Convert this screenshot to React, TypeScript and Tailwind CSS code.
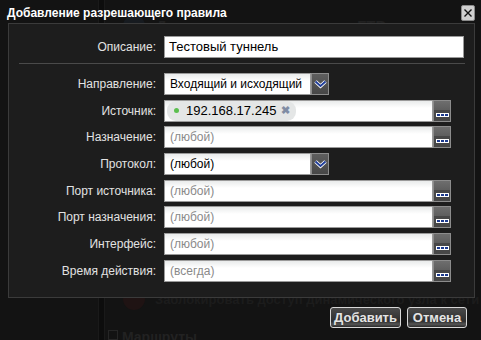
import React from 'react';

const FONT = "font-['Liberation_Sans',Arial,sans-serif]";

const EllipsisButton: React.FC = () => (
  <div className="w-[18px] h-full shrink-0 border border-[#8c8c8c] bg-[linear-gradient(#6e6e6e_0%,#5e5e5e_45%,#474747_45%,#474747_100%)] flex items-end justify-center pb-[4px]">
    <div className="flex gap-[1px] bg-white p-[1px]">
      <span className="w-[3px] h-[2px] bg-[#1d3b8f]" />
      <span className="w-[3px] h-[2px] bg-[#1d3b8f]" />
      <span className="w-[3px] h-[2px] bg-[#1d3b8f]" />
    </div>
  </div>
);

const ArrowButton: React.FC = () => (
  <div className="w-[18px] h-full shrink-0 border border-[#8c8c8c] bg-[linear-gradient(#5e5e5e,#474747)] flex items-center justify-center">
    <svg width="13" height="9" viewBox="0 0 13 9">
      <polyline points="1.5,1.5 6.5,6 11.5,1.5" fill="none" stroke="#ffffff" strokeWidth="3.6" />
      <polyline points="1.5,1.5 6.5,6 11.5,1.5" fill="none" stroke="#1f3d9a" strokeWidth="1.8" />
    </svg>
  </div>
);

const inputBox =
  'flex-1 h-full border border-[#9a9a9a] bg-[linear-gradient(#e9ebeb_0px,#ffffff_7px)] flex items-center px-[5px] text-[12px]';

type FieldProps = {
  label: string;
  value?: string;
  placeholder?: string;
  kind: 'lookup' | 'select';
  chip?: string;
};

const Row: React.FC<FieldProps> = ({ label, value, placeholder, kind, chip }) => {
  const width = kind === 'select' ? 'w-[165px]' : 'w-[287px]';
  return (
    <div className="flex items-center h-[22px]">
      <div className="w-[148px] text-right text-[12px] text-[#e2e2e2] pr-[1px]">{label}</div>
      <div className={`ml-[7px] h-full flex ${width}`}>
        <div className={inputBox}>
          {chip ? (
            <span className="flex items-center h-[20px] -ml-[3px] pl-[7px] pr-[6px] rounded-[9px] bg-[#e4e6e6] text-[13px] text-black">
              <span className="w-[5px] h-[5px] rounded-full bg-[#5bbf4f] mr-[7px]" />
              {chip}
              <span className="ml-[5px] text-[11px] text-[#7f8ca4] font-bold">✖</span>
            </span>
          ) : value ? (
            <span className="text-black">{value}</span>
          ) : (
            <span className="text-[#8a8a8a]">{placeholder}</span>
          )}
        </div>
        {kind === 'select' ? <ArrowButton /> : <EllipsisButton />}
      </div>
    </div>
  );
};

const App: React.FC = () => {
  return (
    <div className={`relative w-[481px] h-[340px] overflow-hidden bg-[#131313] ${FONT}`}>
      {/* page behind the dialog, seen through it */}
      <div aria-hidden className="absolute inset-0 pointer-events-none">
        <div className="absolute left-[98px] top-0 h-full w-[7px] border-x border-[#1a1a1a] bg-[#0d0d0d]" />
        <div className="absolute left-[123px] top-[15px] w-[22px] h-[22px] rounded-full bg-[#171b20]" />
        <div className="absolute left-[156px] top-[15px] text-[15px] font-bold text-[#202020] whitespace-nowrap">
          Доступ для расширенного FTP
        </div>
        <div className="absolute left-[123px] top-[288px] w-[22px] h-[22px] rounded-full bg-[#1f1313]" />
        <div className="absolute left-[155px] top-[290px] text-[13px] font-bold text-[#1c1c1c] whitespace-nowrap">
          Заблокировать доступ динамического узла к сети
        </div>
        <div className="absolute left-[108px] top-[330px] w-[10px] h-[10px] border border-[#262626]" />
        <div className="absolute left-[122px] top-[327px] text-[14px] font-bold text-[#222]">Маршруты</div>
      </div>

      <div className="relative flex flex-col h-full">
        {/* title */}
        <div className="h-[23px] flex items-center justify-between pl-[7px] pr-[6px]">
          <span className="text-[12px] font-bold text-white pt-[3px]">
            Добавление разрешающего правила
          </span>
          <button className="w-[14px] h-[16px] mt-[2px] rounded-[2px] bg-[#cfcfcf] border border-[#8a8a8a] flex items-center justify-center">
            <svg width="10" height="10" viewBox="0 0 10 10">
              <path d="M1.5 1.5 L8.5 8.5 M8.5 1.5 L1.5 8.5" stroke="#111" strokeWidth="1.4" />
            </svg>
          </button>
        </div>

        {/* form panel */}
        <div className="ml-[8px] w-[467px] h-[275px] border border-[#3b3b3b] bg-[#1d1d1d] pt-[12px]">
          <div className="flex items-center h-[22px]">
            <div className="w-[148px] text-right text-[12px] text-[#e2e2e2] pr-[1px]">Описание:</div>
            <div className="ml-[7px] w-[300px] h-full border border-[#9a9a9a] bg-white flex items-center px-[4px] text-[13px] text-black">
              Тестовый туннель
            </div>
          </div>

          <div className="ml-[10px] w-[446px] mt-[5px] h-[1px] bg-[#4a4a4a]" />

          <div className="mt-[9px] flex flex-col gap-[4.7px]">
            <Row label="Направление:" kind="select" value="Входящий и исходящий" />
            <Row label="Источник:" kind="lookup" chip="192.168.17.245" />
            <Row label="Назначение:" kind="lookup" placeholder="(любой)" />
            <Row label="Протокол:" kind="select" value="(любой)" />
            <Row label="Порт источника:" kind="lookup" placeholder="(любой)" />
            <Row label="Порт назначения:" kind="lookup" placeholder="(любой)" />
            <Row label="Интерфейс:" kind="lookup" placeholder="(любой)" />
            <Row label="Время действия:" kind="lookup" placeholder="(всегда)" />
          </div>
        </div>

        {/* actions */}
        <div className="flex justify-end gap-[6px] pr-[14px] mt-[9px]">
          <button className="w-[71px] h-[21px] rounded-[3px] border border-[#d8d8d8] bg-[linear-gradient(#4a4a4a_0%,#2e2e2e_70%,#555_85%,#2a2a2a_100%)] text-[13px] font-bold text-[#e4e4e4]">
            Добавить
          </button>
          <button className="w-[60px] h-[21px] rounded-[3px] border border-[#d8d8d8] bg-[linear-gradient(#4a4a4a_0%,#2e2e2e_70%,#555_85%,#2a2a2a_100%)] text-[13px] font-bold text-[#e4e4e4]">
            Отмена
          </button>
        </div>
      </div>
    </div>
  );
};

export default App;
